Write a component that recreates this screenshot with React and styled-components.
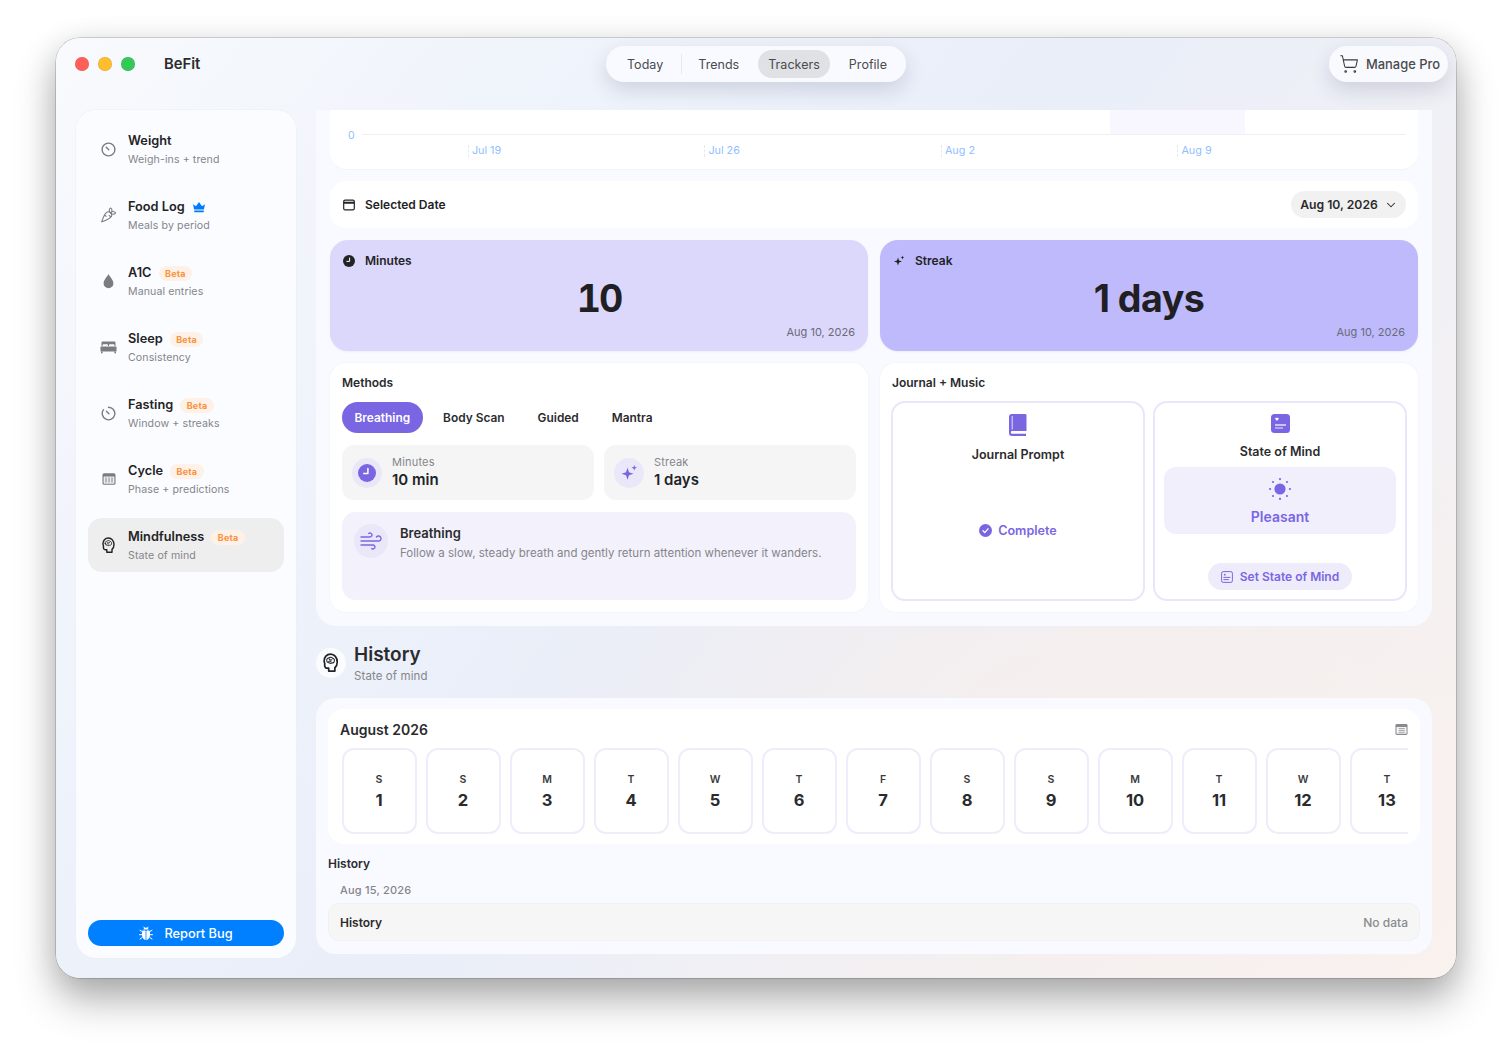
import React from 'react';
import styled, { createGlobalStyle } from 'styled-components';
import { ShoppingCart, ChevronDown, Wind, Carrot } from 'lucide-react';

const Global = createGlobalStyle`
  html, body { margin: 0; padding: 0; background: #fff; }
  body { font-family: Inter, "Liberation Sans", sans-serif; color: #232326; -webkit-font-smoothing: antialiased; }
  * { box-sizing: border-box; }
`;

const Page = styled.div`width: 1512px; height: 1052px; padding: 38px 56px 74px; overflow: hidden;`;
const Win = styled.div`
  width: 1400px; height: 940px; border-radius: 24px; overflow: hidden; display: flex; flex-direction: column;
  background:
    radial-gradient(ellipse at 72% 76%, rgba(250,236,230,.55), rgba(250,236,230,0) 42%),
    linear-gradient(128deg, #f8fafd 0%, #f0f4fb 22%, #e9eef9 48%, #eff0f6 66%, #f9f2ef 100%);
  box-shadow: 0 0 0 .5px rgba(0,0,0,.3), 0 22px 40px rgba(0,0,0,.3), 0 4px 30px rgba(0,0,0,.1);
`;
const TitleBar = styled.header`height: 72px; flex: none; display: grid; grid-template-columns: 1fr auto 1fr; padding: 8px 8px 0; align-items: start;`;
const Left = styled.div`height: 36px; display: flex; align-items: center; padding: 0 0 1px 11px;`;
const Light = styled.span`width: 14px; height: 14px; border-radius: 50%; background: ${p => p.$c}; margin-right: 9px; box-shadow: inset 0 0 0 .5px rgba(0,0,0,.1);`;
const Brand = styled.span`font-size: 14.8px; font-weight: 600; margin-left: 20px; color: #2c2c2e;`;
const TabPill = styled.nav`
  height: 36px; width: 300px; border-radius: 18px; background: #f8faff; padding: 0 9px 0 11px; display: flex; align-items: center;
  box-shadow: 0 8px 20px rgba(40,50,90,.16);
`;
const TopTab = styled.span`
  height: 28px; line-height: 29px; padding: 0 10px; font-size: 12.5px; color: #4a4a4e; border-radius: 14px; letter-spacing: .03px;
  background: ${p => p.$on ? '#e0e1e5' : 'transparent'}; & + & { margin-left: 9px; }
`;
const Sep = styled.i`width: 1px; height: 20px; background: #e6e8ee; margin: 0 6px 0 8px;`;
const ProWrap = styled.div`display: flex; justify-content: flex-end;`;
const ProBtn = styled.div`
  height: 36px; width: 119px; border-radius: 18px; background: #f9fafe; display: flex; align-items: center; gap: 7px; padding-left: 10px;
  font-size: 12.9px; color: #4a4a4e; font-weight: 500; box-shadow: 0 8px 20px rgba(40,50,90,.16);
`;
const Body = styled.div`flex: 1; min-height: 0; display: flex; gap: 20px; padding: 0 24px 20px 20px;`;
const Side = styled.aside`
  width: 220px; flex: none; background: #fbfcff; border-radius: 20px; padding: 12px; display: flex; flex-direction: column; gap: 12px;
  box-shadow: 0 0 0 1px rgba(235,238,245,.5);
`;
const Item = styled.div`
  height: 54px; border-radius: 14px; display: flex; align-items: center; gap: 11px; padding-left: 12px; background: ${p => p.$on ? '#eeeeef' : 'transparent'};
  color: ${p => p.$on ? '#232326' : '#7b7b80'};
`;
const IconBox = styled.span`width: 17px; height: 17px; display: flex; align-items: center; justify-content: center; flex: none;`;
const ItemText = styled.div`display: flex; flex-direction: column; gap: 4px; padding-top: 2px;`;
const ItemTitle = styled.div`display: flex; align-items: center; gap: 7px; font-size: 12.75px; font-weight: 600; color: #232326; line-height: 16px; height: 16px;`;
const ItemSub = styled.div`font-size: 10.6px; color: #85858a; line-height: 14px; letter-spacing: .1px;`;
const Beta = styled.span`font-size: 9px; font-weight: 700; color: #fb923c; background: #fdf1e8; border-radius: 8px; height: 15px; line-height: 15px; padding: 0 6.5px; letter-spacing: .2px;`;
const BugBtn = styled.button`
  margin-top: auto; height: 26px; border: 0; border-radius: 13px; background: #007fff; color: #fff; font: 500 12.8px Inter, sans-serif;
  display: flex; align-items: center; justify-content: center; gap: 11px;
`;
const Main = styled.main`flex: 1; min-width: 0; display: flex; flex-direction: column;`;
const TopPanel = styled.section`
  height: 516px; flex: none; background: #f9faff; border-radius: 0 0 20px 20px; padding: 0 14px 14px; display: flex; flex-direction: column; gap: 12px;
`;
const ChartCard = styled.div`height: 59px; flex: none; background: #fff; border-radius: 0 0 16px 16px; display: flex; flex-direction: column; padding: 0 12px 0 0; box-shadow: 0 1px 0 #f3f4f8;`;
const Plot = styled.div`height: 25px; margin-left: 32px; border-bottom: 1px solid #f0f0f3; position: relative; flex: none;`;
const Band = styled.div`position: absolute; left: 748px; width: 135px; top: 0; bottom: 0; background: #f8f6fe;`;
const Zero = styled.span`position: absolute; left: -14px; bottom: -9px; font-size: 10.5px; color: #8fc0ff; line-height: 14px;`;
const Axis = styled.div`display: flex; margin-left: 137.5px; padding-top: 10px;`;
const Tick = styled.span`width: 236.5px; height: 12px; flex: none; border-left: 1px dashed #e6e8ec; padding-left: 3.4px; font-size: 10.8px; line-height: 12px; color: #8fc0ff;`;
const DateCard = styled.div`height: 47px; flex: none; background: #fff; border-radius: 16px; padding: 0 12px 0 13px; display: flex; align-items: center; justify-content: space-between;`;
const CardLabel = styled.div`display: flex; align-items: center; gap: 10px; font-size: 12px; font-weight: 600; color: #232326;`;
const DatePill = styled.div`height: 27px; width: 115px; border-radius: 14px; background: #f1f1f2; font-size: 12.2px; font-weight: 600; display: flex; align-items: center; justify-content: center; gap: 6px; color: #2b2b2e; padding-left: 1px;`;
const Two = styled.div`display: grid; grid-template-columns: 1fr 1fr; gap: 12px;`;
const Stat = styled.div`height: 111px; border-radius: 18px; background: ${p => p.$bg}; padding: 13px 13px 0; display: flex; flex-direction: column; box-shadow: 0 1px 2px rgba(100,90,200,.08);`;
const StatValue = styled.div`font-size: 37.6px; font-weight: 700; line-height: 46px; text-align: center; color: #1f1f24; margin-top: 8px; font-variant-numeric: ${p => p.$tab ? 'tabular-nums' : 'normal'}; letter-spacing: ${p => p.$tab ? '-2px' : '-.5px'};`;
const StatDate = styled.div`font-size: 11px; color: #6a6a78; text-align: right; margin-top: 3px; line-height: 14px;`;
const Card = styled.div`height: 249px; background: #fff; border-radius: 16px; padding: 12px; display: flex; flex-direction: column; box-shadow: 0 0 0 1px #f6f6fa;`;
const CardTitle = styled.div`font-size: 12px; font-weight: 600; line-height: 16px; color: #2b2b2e; margin-bottom: 11px;`;
const Seg = styled.div`display: flex; gap: 8px; height: 31px; flex: none;`;
const SegBtn = styled.span`
  height: 31px; border-radius: 16px; padding: 0 12.5px; line-height: 32px; font-size: 11.9px; font-weight: 600;
  color: ${p => p.$on ? '#fff' : '#2b2b2e'}; background: ${p => p.$on ? '#7a66e3' : 'transparent'};
`;
const MiniGrid = styled.div`display: grid; grid-template-columns: 1fr 1fr; gap: 10px; margin-top: 12px;`;
const Mini = styled.div`height: 55px; border-radius: 12px; background: #f5f5f6; display: flex; align-items: center; padding-left: 10px; gap: 10px;`;
const Disc = styled.span`width: ${p => p.$s}px; height: ${p => p.$s}px; border-radius: 50%; background: #eae8f8; display: flex; align-items: center; justify-content: center; flex: none;`;
const MiniLabel = styled.div`font-size: 11px; color: #85858a; line-height: 14px; letter-spacing: .2px;`;
const MiniValue = styled.div`font-size: 15px; font-weight: 600; line-height: 20px; margin-top: 1px; color: #232326;`;
const Note = styled.div`flex: 1; margin-top: 12px; background: #f3f1fc; border-radius: 14px; padding: 12px; display: flex; gap: 12px;`;
const NoteTitle = styled.div`font-size: 13px; font-weight: 600; line-height: 18px; color: #2b2b2e;`;
const NoteText = styled.div`font-size: 11.5px; color: #85858a; line-height: 16px; margin-top: 3px; letter-spacing: .02px;`;
const JournalGrid = styled.div`display: grid; grid-template-columns: 254px 254px; gap: 8px; flex: 1; margin: -1px;`;
const Tile = styled.div`border: 2px solid #e8e6fb; border-radius: 14px; padding: 11px 9px 9px; display: flex; flex-direction: column; align-items: center;`;
const TileTitle = styled.div`font-size: 12.5px; font-weight: 600; line-height: 16px; color: #2b2b2e; margin-top: 11px;`;
const Complete = styled.div`display: flex; align-items: center; gap: 6px; color: #7a66e3; font-size: 12.6px; font-weight: 600; margin-top: 60px;`;
const Mood = styled.div`width: 232px; height: 67px; margin-top: 7px; border-radius: 12px; background: #f1effc; display: flex; flex-direction: column; align-items: center; padding-top: 11px; gap: 8px; color: #7a66e3; font-size: 14px; font-weight: 600; line-height: 18px;`;
const SetBtn = styled.div`margin-top: auto; height: 27px; width: 144px; border-radius: 14px; background: #eeebfa; color: #7a66e3; font-size: 12px; font-weight: 600; display: flex; align-items: center; justify-content: center; gap: 7px;`;
const HistHead = styled.div`height: 72px; flex: none; display: flex; align-items: center; gap: 8px; padding-top: 2px;`;
const HistDisc = styled.span`width: 30px; height: 30px; border-radius: 50%; background: #fbfcff; display: flex; align-items: center; justify-content: center; color: #232326; margin-top: -1px;`;
const HistTitle = styled.div`font-size: 19px; font-weight: 600; line-height: 26px; color: #2b2b2e;`;
const HistSub = styled.div`font-size: 11.5px; color: #85858a; line-height: 16px; letter-spacing: .1px;`;
const HistPanel = styled.section`height: 256px; flex: none; background: #f9faff; border-radius: 20px; padding: 11px 12px 12px; display: flex; flex-direction: column;`;
const CalCard = styled.div`height: 135px; flex: none; background: #fff; border-radius: 16px; padding: 10px 12px 0;`;
const CalHead = styled.div`display: flex; justify-content: space-between; align-items: center; height: 20px; font-size: 14px; font-weight: 600; color: #2b2b2e; margin-bottom: 9px;`;
const Strip = styled.div`display: flex; gap: 9px; overflow: hidden; padding-left: 1.5px;`;
const Day = styled.div`width: 75px; height: 86px; flex: none; border: 2px solid #efedfc; border-radius: 12px; display: flex; flex-direction: column; align-items: center; justify-content: center; padding-top: 1px;`;
const DayName = styled.div`font-size: 10.5px; font-weight: 600; line-height: 14px; color: #3a3a3e;`;
const DayNum = styled.div`font-size: 16.5px; font-weight: 700; line-height: 22px; margin-top: 2px; color: #2b2b2e;`;
const Label = styled.div`font-size: 12px; font-weight: 600; line-height: 16px; margin-top: 12px; color: #2b2b2e;`;
const DateLabel = styled.div`font-size: 11px; font-weight: 500; line-height: 14px; color: #85858a; margin: 11px 0 6px 12px; letter-spacing: .2px;`;
const Row = styled.div`height: 38px; border-radius: 12px; background: #f6f6f7; box-shadow: inset 0 0 0 1px #f1f1f3; display: flex; justify-content: space-between; align-items: center; padding: 0 12px; font-size: 12px; font-weight: 600; color: #2b2b2e;`;
const Muted = styled.span`color: #8a8a8e; font-weight: 500;`;

const Head = ({ s = 17 }) => (
  <svg width={s * 0.8} height={s} viewBox="0 0 16 20" fill="none" stroke="currentColor" strokeWidth="1.8" strokeLinecap="round" strokeLinejoin="round">
    <path d="M12.500 19v-3.500C14.300 14 15 12 15 9.500 15 4.800 12 1.200 8 1.200 3.800 1.200 1.200 4.500 1.200 8.500c0 1 .3 1.800.6 2.500v2.500C1.800 15 3 16 4.500 16H6v3z" />
    <path strokeWidth="1.1" d="M4 8c-.4-1.500.8-2.900 2.100-2.600.8-1.300 3.300-1.300 4 .1 1.500.1 2.300 1.600 1.800 2.800.2 1.400-1.200 2.400-2.400 2-.9.700-2.200.7-3-.1C5.200 10.400 3.700 9.400 4 8z M6.600 6.400c.6 1 1.700 1.200 2.800.7 M6 8.800c.9-.7 1.700-.5 2.300.2" />
  </svg>
);
const Gauge = () => (
  <svg width="15" height="15" viewBox="0 0 15 15" fill="none" stroke="currentColor" strokeWidth="1.4" strokeLinecap="round">
    <circle cx="7.500" cy="7.500" r="6.400" /><path d="M5.200 5.200l2.600 2.600" />
  </svg>
);
const Drop = () => (
  <svg width="13" height="16" viewBox="0 0 13 16" fill="currentColor"><path d="M6.500 1C5.500 3.600 1.600 6.600 1.600 10.400a4.900 4.900 0 0 0 9.800 0C11.400 6.600 7.500 3.600 6.500 1z" /></svg>
);
const Bed = () => (
  <svg width="17" height="14" viewBox="0 0 17 14" fill="currentColor">
    <path d="M2.500 1.500h12a1 1 0 0 1 1 1V6h-1V5.200a1 1 0 0 0-1-1H10a1 1 0 0 0-1 1V6H8V5.200a1 1 0 0 0-1-1H3.500a1 1 0 0 0-1 1V6h-1V2.500a1 1 0 0 1 1-1z" />
    <rect x=".5" y="6.600" width="16" height="4.900" rx=".6" /><rect x="1" y="11.500" width="1.600" height="1.800" /><rect x="14.400" y="11.500" width="1.600" height="1.800" />
  </svg>
);
const Timer = () => (
  <svg width="15" height="15" viewBox="0 0 15 15" fill="none" stroke="currentColor" strokeWidth="1.4" strokeLinecap="round">
    <path d="M7.500 1.200a6.300 6.300 0 1 1-5 2.500" /><path d="M5.400 5.200l2.600 2.600" />
  </svg>
);
const Cal = ({ s = 14, c = 'currentColor' }) => (
  <svg width={s} height={s} viewBox="0 0 14 14" fill="none">
    <rect x=".5" y="1.200" width="13" height="11.600" rx="1.600" fill={c} />
    <rect x="1.600" y="4.400" width="10.800" height="7.300" rx=".6" fill="#fff" opacity=".85" />
    <path d="M4 5.500v5M7 5.500v5M10 5.500v5" stroke={c} strokeWidth=".9" />
  </svg>
);
const CalLine = () => (
  <svg width="12" height="12" viewBox="0 0 12 12" fill="none" stroke="#232326" strokeWidth="1.200">
    <rect x=".7" y="1.200" width="10.600" height="9.600" rx="1.400" /><path d="M.7 3.800h10.600" strokeWidth="2" />
  </svg>
);
const CalSmall = () => (
  <svg width="13" height="13" viewBox="0 0 14 14" fill="none">
    <rect x=".5" y="1.200" width="13" height="11.600" rx="1.600" fill="#8a8a8e" />
    <rect x="1.600" y="4.200" width="10.800" height="7.500" rx=".6" fill="#fff" opacity=".9" />
    <path d="M4 6h6.500M4 8h6.500M4 10h6.500" stroke="#8a8a8e" strokeWidth=".8" />
  </svg>
);
const Crown = () => (
  <svg width="14" height="12" viewBox="0 0 14 12" fill="#007aff">
    <path d="M1 3.200l3 2.100L7 1l3 4.300 3-2.100-1.100 5.200H2.100z" /><rect x="2.200" y="9.400" width="9.600" height="1.800" rx=".5" />
  </svg>
);
const ClockFill = ({ s = 12, bg = '#232326' }) => (
  <svg width={s} height={s} viewBox="0 0 12 12"><circle cx="6" cy="6" r="6" fill={bg} /><path d="M6.600 3v3.400H3.800" fill="none" stroke="#fff" strokeWidth="1" strokeLinecap="round" strokeLinejoin="round" /></svg>
);
const Spark = ({ s = 12, c = '#232326' }) => (
  <svg width={s} height={s} viewBox="0 0 12 12" fill={c}>
    <path d="M5 2.500l1 3 3 1-3 1-1 3-1-3-3-1 3-1z" /><path d="M9.500 .6l.5 1.400 1.400.5-1.400.5-.5 1.400-.5-1.400-1.400-.5L9 2z" />
  </svg>
);
const Book = () => (
  <svg width="18" height="22" viewBox="0 0 18 22">
    <path d="M3 0h13a2 2 0 0 1 1.500.8V17H3.200a1.200 1.200 0 0 0 0 2.800H17V22H3a3 3 0 0 1-3-3V3a3 3 0 0 1 3-3z" fill="#7a66e3" />
    <path d="M3.200 2v13.500" stroke="#fff" strokeWidth="1" opacity=".8" />
  </svg>
);
const MindDoc = () => (
  <svg width="19" height="19" viewBox="0 0 19 19">
    <rect width="19" height="19" rx="3.500" fill="#7a66e3" />
    <path d="M6 4.200c.8-.9 2-.3 1.600.8-.3.7-1 1.200-1.600 1.800-.7-.6-1.400-1.100-1.700-1.800C3.900 3.900 5.200 3.300 6 4.200z" fill="#fff" />
    <path d="M4 11h11" stroke="#fff" strokeWidth="1.200" /><path d="M4 14h8" stroke="#fff" strokeWidth="1.200" opacity=".7" />
  </svg>
);
const CheckFill = () => (
  <svg width="13" height="13" viewBox="0 0 13 13"><circle cx="6.500" cy="6.500" r="6.500" fill="#7a66e3" /><path d="M4 6.800l1.800 1.800L9 4.800" fill="none" stroke="#fff" strokeWidth="1.300" strokeLinecap="round" strokeLinejoin="round" /></svg>
);
const Sun = () => (
  <svg width="22" height="22" viewBox="0 0 22 22" fill="#7a66e3">
    <circle cx="11" cy="11" r="5.600" />
    {[0, 45, 90, 135, 180, 225, 270, 315].map(a => (
      <circle key={a} cx={11 + 9.9 * Math.cos(a * Math.PI / 180)} cy={11 + 9.9 * Math.sin(a * Math.PI / 180)} r="1.100" />
    ))}
  </svg>
);
const MindOutline = () => (
  <svg width="12" height="12" viewBox="0 0 12 12" fill="none" stroke="#7a66e3" strokeWidth="1">
    <rect x=".6" y=".6" width="10.800" height="10.800" rx="1.600" />
    <circle cx="3.800" cy="3.700" r=".9" fill="#7a66e3" stroke="none" /><path d="M2.400 6.400h7M2.400 8.600h5.400" />
  </svg>
);
const Ladybug = () => (
  <svg width="14" height="15" viewBox="0 0 14 15" fill="#fff">
    <path d="M4.400 3.600C4.600 2.200 5.600 1.500 7 1.500s2.400.7 2.600 2.100z" />
    <path d="M3.400 4.500h3.200v9.400C4.400 13.600 3 11.700 3 9c0-1.700 0-3.300.4-4.500z M7.400 4.500h3.200c.4 1.200.4 2.800.4 4.500 0 2.700-1.400 4.600-3.600 4.900z" />
    <path d="M4.800 1l1 1.200M9.200 1l-1 1.200M3.200 5.500L1 4.300M10.800 5.500L13 4.300M2.800 8.700H.5M11.200 8.700h2.300M3.200 11.500L1 13M10.800 11.500l2.200 1.500" stroke="#fff" strokeWidth="1" strokeLinecap="round" fill="none" />
  </svg>
);

const nav = [
  ['Weight', 'Weigh-ins + trend', <Gauge />],
  ['Food Log', 'Meals by period', <Carrot size={18} strokeWidth={1.5} />, 'crown'],
  ['A1C', 'Manual entries', <Drop />, 'beta'],
  ['Sleep', 'Consistency', <Bed />, 'beta'],
  ['Fasting', 'Window + streaks', <Timer />, 'beta'],
  ['Cycle', 'Phase + predictions', <Cal />, 'beta'],
  ['Mindfulness', 'State of mind', <Head s={16} />, 'beta', true],
];
const days = [['S', 1], ['S', 2], ['M', 3], ['T', 4], ['W', 5], ['T', 6], ['F', 7], ['S', 8], ['S', 9], ['M', 10], ['T', 11], ['W', 12], ['T', 13]];

export default function App() {
  return (
    <Page>
      <Global />
      <Win>
        <TitleBar>
          <Left>
            <Light $c="#ff5f57" /><Light $c="#febc2e" /><Light $c="#34c759" />
            <Brand>BeFit</Brand>
          </Left>
          <TabPill>
            <TopTab>Today</TopTab><Sep />
            <TopTab>Trends</TopTab><TopTab $on>Trackers</TopTab><TopTab>Profile</TopTab>
          </TabPill>
          <ProWrap>
            <ProBtn><ShoppingCart size={20} strokeWidth={1.25} color="#3a3a3e" />Manage Pro</ProBtn>
          </ProWrap>
        </TitleBar>
        <Body>
          <Side>
            {nav.map(([t, s, ic, tag, on]) => (
              <Item key={t} $on={on}>
                <IconBox>{ic}</IconBox>
                <ItemText>
                  <ItemTitle>{t}{tag === 'beta' && <Beta>Beta</Beta>}{tag === 'crown' && <Crown />}</ItemTitle>
                  <ItemSub>{s}</ItemSub>
                </ItemText>
              </Item>
            ))}
            <BugBtn><Ladybug />Report Bug</BugBtn>
          </Side>
          <Main>
            <TopPanel>
              <ChartCard>
                <Plot><Band /><Zero>0</Zero></Plot>
                <Axis>
                  {['Jul 19', 'Jul 26', 'Aug 2', 'Aug 9'].map(x => <Tick key={x}>{x}</Tick>)}
                </Axis>
              </ChartCard>
              <DateCard>
                <CardLabel><CalLine />Selected Date</CardLabel>
                <DatePill>Aug 10, 2026<ChevronDown size={14} strokeWidth={1.8} /></DatePill>
              </DateCard>
              <Two>
                <Stat $bg="#dcd8fc">
                  <CardLabel><ClockFill />Minutes</CardLabel>
                  <StatValue $tab>10</StatValue>
                  <StatDate>Aug 10, 2026</StatDate>
                </Stat>
                <Stat $bg="#bfbafc">
                  <CardLabel><Spark />Streak</CardLabel>
                  <StatValue>1 days</StatValue>
                  <StatDate>Aug 10, 2026</StatDate>
                </Stat>
              </Two>
              <Two>
                <Card>
                  <CardTitle>Methods</CardTitle>
                  <Seg>
                    <SegBtn $on>Breathing</SegBtn><SegBtn>Body Scan</SegBtn><SegBtn>Guided</SegBtn><SegBtn>Mantra</SegBtn>
                  </Seg>
                  <MiniGrid>
                    <Mini>
                      <Disc $s={30}><ClockFill s={18} bg="#7a66e3" /></Disc>
                      <div><MiniLabel>Minutes</MiniLabel><MiniValue>10 min</MiniValue></div>
                    </Mini>
                    <Mini>
                      <Disc $s={30}><Spark s={18} c="#7a66e3" /></Disc>
                      <div><MiniLabel>Streak</MiniLabel><MiniValue>1 days</MiniValue></div>
                    </Mini>
                  </MiniGrid>
                  <Note>
                    <Disc $s={34}><Wind size={24} strokeWidth={1.4} color="#7a66e3" /></Disc>
                    <div>
                      <NoteTitle>Breathing</NoteTitle>
                      <NoteText>Follow a slow, steady breath and gently return attention whenever it wanders.</NoteText>
                    </div>
                  </Note>
                </Card>
                <Card>
                  <CardTitle>Journal + Music</CardTitle>
                  <JournalGrid>
                    <Tile>
                      <Book />
                      <TileTitle>Journal Prompt</TileTitle>
                      <Complete><CheckFill />Complete</Complete>
                    </Tile>
                    <Tile>
                      <MindDoc />
                      <TileTitle>State of Mind</TileTitle>
                      <Mood><Sun />Pleasant</Mood>
                      <SetBtn><MindOutline />Set State of Mind</SetBtn>
                    </Tile>
                  </JournalGrid>
                </Card>
              </Two>
            </TopPanel>
            <HistHead>
              <HistDisc><Head s={19} /></HistDisc>
              <div>
                <HistTitle>History</HistTitle>
                <HistSub>State of mind</HistSub>
              </div>
            </HistHead>
            <HistPanel>
              <CalCard>
                <CalHead>August 2026<CalSmall /></CalHead>
                <Strip>
                  {days.map(([d, n]) => (
                    <Day key={n}><DayName>{d}</DayName><DayNum>{n}</DayNum></Day>
                  ))}
                </Strip>
              </CalCard>
              <Label>History</Label>
              <DateLabel>Aug 15, 2026</DateLabel>
              <Row>History<Muted>No data</Muted></Row>
            </HistPanel>
          </Main>
        </Body>
      </Win>
    </Page>
  );
}
